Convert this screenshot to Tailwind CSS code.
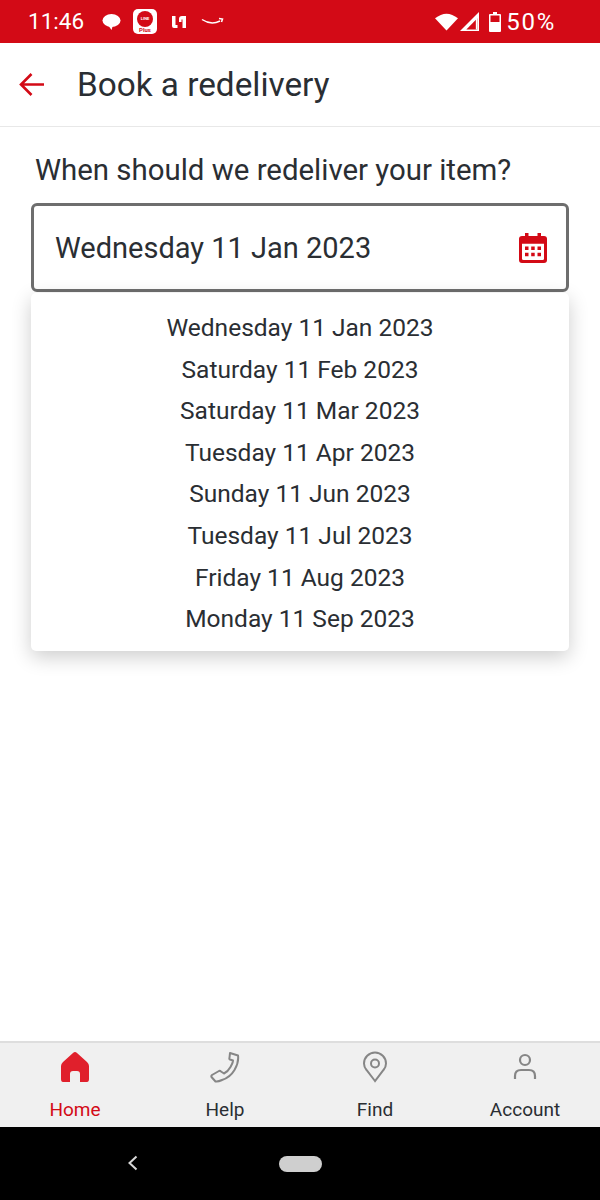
<!doctype html>
<html>

<head>
    <meta charset="UTF-8">
    <meta name="viewport" content="width=device-width, initial-scale=1.0">
    <script src="https://cdn.jsdelivr.net/npm/@tailwindcss/browser@4"></script>
</head>

<body>
    <div class="w-[600px] h-[1200px] flex flex-col bg-white font-[Roboto,sans-serif] overflow-hidden">
        <!-- status bar -->
        <div class="h-[43px] shrink-0 bg-[#d30a16] flex items-center pl-[28px] pr-[44px] text-white">
            <span class="text-[22.5px] leading-none w-[57px]">11:46</span>
            <svg class="ml-[16px] w-[20px] h-[20px]" viewBox="0 0 20 20" fill="#fff">
                <ellipse cx="10.5" cy="8.5" rx="9" ry="6.5" />
                <path d="M7 13l5 0-1.500 5z" />
            </svg>
            <div class="ml-[12px] w-[24px] h-[25px] bg-white rounded-[5px] flex flex-col items-center">
                <div class="mt-[2px] w-[16px] h-[16px] rounded-full bg-[#d30a16] text-white text-[4px] leading-[16px] text-center font-bold">LINE</div>
                <div class="text-[#d30a16] text-[6px] leading-[6px] font-bold">Plus</div>
            </div>
            <svg class="ml-[14px] w-[16px] h-[16px]" viewBox="0 0 16 16" fill="#fff">
                <path d="M1 2h3.500v9h2v3H3q-2 0-2-2zM8 5q0-3 3-3h4v12h-3.500V5.500H10.500V8H8z" />
            </svg>
            <svg class="ml-[14px] w-[23px] h-[10px]" viewBox="0 0 23 10" fill="none" stroke="#fff" stroke-width="1.500">
                <path d="M1 2.500q9 6 18 1.500M18 1.500l3.500 0.500-1 3" />
            </svg>
            <div class="ml-auto flex items-center">
                <svg class="w-[23px] h-[19px]" viewBox="0 0 22 17" fill="#fff">
                    <path d="M0 5.500Q11-3.500 22 5.500L11 17z" />
                </svg>
                <svg class="ml-[2px] w-[19px] h-[19px]" viewBox="0 0 18 18">
                    <path d="M0 18L18 0v18z" fill="#fff" />
                    <path d="M6 16.500l10.500-10.500v10.500z" fill="#d30a16" />
                    <path d="M15 6l1.500-1.500v12H15z" fill="#fff" />
                </svg>
                <svg class="ml-[10px] w-[12px] h-[20px]" viewBox="0 0 12 20" fill="#fff">
                    <path d="M4 0h4v2h3q1 0 1 1v16q0 1-1 1H1q-1 0-1-1V3q0-1 1-1h3z" />
                    <path d="M1.500 3.500h9V10h-9z" fill="#d30a16" />
                </svg>
                <span class="ml-[5px] text-[24px] leading-none tracking-[1.700px]">50%</span>
            </div>
        </div>

        <!-- app bar -->
        <div class="h-[84px] shrink-0 flex items-center border-b border-[#e8e8e8] pl-[19px]">
            <svg class="w-[25px] h-[25px]" viewBox="0 0 25 25" fill="none" stroke="#d30a16" stroke-width="2.600">
                <path d="M25 12.500H2M12.500 2L2 12.500 12.500 23" />
            </svg>
            <h1 class="ml-[33px] text-[33.300px] leading-none text-[#2a2e33]">Book a redelivery</h1>
        </div>

        <!-- main -->
        <div class="flex-1 px-[31px]">
            <p class="mt-[26px] pl-[4px] text-[29.400px] leading-[34px] text-[#2a2e33]">When should we redeliver your item?</p>
            <div class="relative mt-[16px]">
                <div class="h-[89px] border-[3px] border-[#6e6e6e] rounded-[6px] flex items-center justify-between pl-[21px] pr-[19px]">
                    <span class="pt-[3px] text-[29px] text-[#2a2e33]">Wednesday 11 Jan 2023</span>
                    <svg class="w-[28px] h-[31px]" viewBox="0 0 28 32" preserveAspectRatio="none" fill="#d30a16">
                        <path fill-rule="evenodd" d="M6 1h3.500v3h9V1H22v3h3q3 0 3 3v22q0 3-3 3H3q-3 0-3-3V7q0-3 3-3h3zM3 12v15.500q0 1.500 1.500 1.500h19q1.500 0 1.500-1.500V12z" />
                        <path d="M6 15h3.500v3.500H6zM12.200 15h3.500v3.500h-3.500zM18.500 15H22v3.500h-3.500zM6 21.500h3.500V25H6zM12.200 21.500h3.500V25h-3.500zM18.500 21.500H22V25h-3.500z" />
                    </svg>
                </div>
                <ul class="absolute top-[90px] left-0 w-full h-[358px] bg-white rounded-[5px] shadow-[0_6px_20px_rgba(0,0,0,0.2)] pt-[14px] text-center text-[24.500px] leading-[41.600px] text-[#2a2e33]">
                    <li>Wednesday 11 Jan 2023</li>
                    <li>Saturday 11 Feb 2023</li>
                    <li>Saturday 11 Mar 2023</li>
                    <li>Tuesday 11 Apr 2023</li>
                    <li>Sunday 11 Jun 2023</li>
                    <li>Tuesday 11 Jul 2023</li>
                    <li>Friday 11 Aug 2023</li>
                    <li>Monday 11 Sep 2023</li>
                </ul>
            </div>
        </div>

        <!-- bottom nav -->
        <div class="h-[86px] shrink-0 grid grid-cols-4 bg-[#f0f0f0] border-t-2 border-[#dedede] text-[19px] leading-none text-[#2a2e33]">
            <div class="flex flex-col items-center pt-[8px] text-[#d30a16]">
                <svg class="w-[30px] h-[32px]" viewBox="0 0 30 32" fill="#e0202c">
                    <path d="M15 1q1 0 2 1l10 9q2 2 2 4v13q0 3-2 3h-7V23q0-3-3-3h-4q-3 0-3 3v8H3q-2 0-2-3V15q0-2 2-4L13 2q1-1 2-1z" />
                </svg>
                <span class="mt-[17px]">Home</span>
            </div>
            <div class="flex flex-col items-center pt-[8px]">
                <svg class="w-[30px] h-[32px]" viewBox="0 0 30 32" fill="none" stroke="#868686" stroke-width="2" stroke-linejoin="round">
                    <path d="M20 2l8 2.500q1 7-3.500 14.500T12 29q-4 2-6.500 1.500L1.500 26q-.5-1 .5-2l7-4q1-.5 2 .5l3 2q4-2 6.500-6.500t2.500-6.500l-3-1q-1-.5-.5-2z" />
                </svg>
                <span class="mt-[17px]">Help</span>
            </div>
            <div class="flex flex-col items-center pt-[8px]">
                <svg class="w-[30px] h-[32px]" viewBox="0 0 30 32" fill="none" stroke="#868686" stroke-width="2">
                    <path d="M15 30L6.500 19Q4 16 4 12.500a11 11 0 0 1 22 0q0 3.500-2.500 6.500z" />
                    <circle cx="15" cy="12.500" r="4" />
                </svg>
                <span class="mt-[17px]">Find</span>
            </div>
            <div class="flex flex-col items-center pt-[8px]">
                <svg class="w-[30px] h-[32px]" viewBox="0 0 30 32" fill="none" stroke="#868686" stroke-width="2.200">
                    <circle cx="15" cy="9" r="5" />
                    <path d="M5 28v-3q0-6 6-6h8q6 0 6 6v3" />
                </svg>
                <span class="mt-[17px]">Account</span>
            </div>
        </div>

        <!-- android nav -->
        <div class="h-[73px] shrink-0 bg-black flex items-center justify-center relative">
            <svg class="absolute left-[127px] top-[28px] w-[12px] h-[16px]" viewBox="0 0 12 16" fill="none" stroke="#d8d8d8" stroke-width="2">
                <path d="M9.500 1.500L2.500 8l7 6.500" />
            </svg>
            <div class="w-[43px] h-[16px] rounded-full bg-[#cfcfcf]"></div>
        </div>
    </div>
</body>

</html>
